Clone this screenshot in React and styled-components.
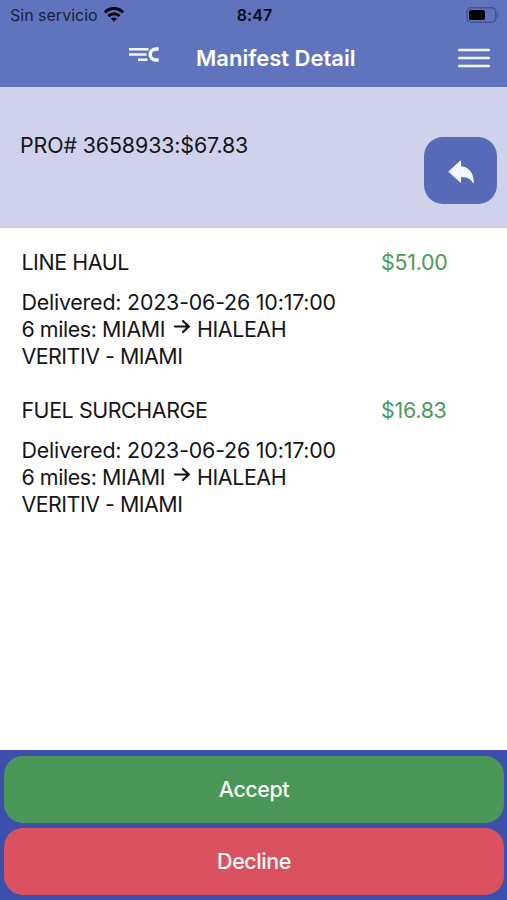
import React from "react";
import styled, { createGlobalStyle } from "styled-components";

const GlobalStyle = createGlobalStyle`
  * {
    box-sizing: border-box;
  }

  body {
    margin: 0;
    font-family: Inter, "Liberation Sans", sans-serif;
    color: #151518;
    background-color: #fff;
  }
`;

const Screen = styled.div`
  display: flex;
  flex-direction: column;
  height: 100vh;
  overflow: hidden;
`;

const Header = styled.header`
  height: 87px;
  background-color: #6074bd;
`;

const StatusBar = styled.div`
  display: grid;
  grid-template-columns: 1fr auto 1fr;
  align-items: center;
  height: 29px;
  padding: 0 8px 0 10px;
`;

const Carrier = styled.div`
  display: flex;
  align-items: center;
  gap: 6px;
  font-size: 16px;
  line-height: 20px;
  color: #1a2140;
`;

const Clock = styled.div`
  font-size: 16px;
  line-height: 20px;
  font-weight: 600;
  letter-spacing: 0.1px;
  color: #080b18;
`;

const BatteryIcon = styled.svg`
  justify-self: end;
`;

const NavBar = styled.div`
  display: flex;
  align-items: center;
  height: 58px;
  padding: 0 17px 1px 129px;
`;

const LogoIcon = styled.svg`
  margin: 0 37px 6px 0;
`;

const MenuIcon = styled.svg`
  margin-top: 1px;
`;

const Title = styled.h1`
  flex: 1;
  margin: 0;
  font-size: 22px;
  line-height: 28px;
  font-weight: 600;
  color: #fff;
`;

const Text = styled.span`
  font-size: 21.4px;
  line-height: 27px;
  white-space: nowrap;
  letter-spacing: ${(props) => props.$spacing || -0.4}px;
`;

const Summary = styled.section`
  display: flex;
  justify-content: space-between;
  align-items: flex-start;
  height: 141px;
  padding: 45px 10px 0 20px;
  background-color: #d0d2ec;
  border-bottom: 2px solid #cccdde;
`;

const BackButton = styled.button`
  display: flex;
  align-items: center;
  justify-content: center;
  width: 73px;
  height: 67px;
  margin-top: 5px;
  padding: 2px 0 0 1px;
  border: 0;
  border-radius: 19px;
  background-color: #576bb8;
`;

const Charges = styled.main`
  flex: 1;
  padding: 21px 0 0 21.4px;
`;

const Charge = styled.article`
  height: 148px;
`;

const ChargeHead = styled.div`
  display: grid;
  grid-template-columns: 359.6px 1fr;
  margin-bottom: 13px;
`;

const Amount = styled(Text)`
  color: #4c9a5c;
`;

const Line = styled.div`
  display: flex;
  height: 27px;
`;

const ArrowIcon = styled.svg`
  margin: 3px 6px 0 8px;
`;

const Footer = styled.footer`
  display: flex;
  flex-direction: column;
  gap: 5px;
  height: 150px;
  padding: 6px 3px 0 4px;
  background-color: #3c4fad;
`;

const ActionButton = styled.button`
  height: 67px;
  padding: 0 0 1px;
  border: 0;
  border-radius: 19px;
  font-family: inherit;
  font-size: 21.4px;
  font-weight: 500;
  letter-spacing: -0.4px;
  color: #f8fbf8;
  background-color: ${(props) => (props.$danger ? "#da5260" : "#4a9757")};
`;

const charges = [
  { name: "LINE HAUL", amount: "$51.00" },
  { name: "FUEL SURCHARGE", amount: "$16.83" },
];

export default function App() {
  return (
    <>
      <GlobalStyle />
      <Screen>
        <Header>
          <StatusBar>
            <Carrier>
              Sin servicio
              <svg width="20" height="15" viewBox="0 0 20 15" fill="none">
                <g stroke="#05070f" strokeWidth="3">
                  <path d="M1 5.4C6 .1 14 .1 19 5.4" />
                  <path d="M4.4 9.1C7.6 6 12.4 6 15.6 9.1" />
                </g>
                <path d="M10 14.8 6.9 11.600C8.8 10.1 11.2 10.1 13.1 11.600Z" fill="#05070f" />
              </svg>
            </Carrier>
            <Clock>8:47</Clock>
            <BatteryIcon width="33" height="16" viewBox="0 0 33 16">
              <rect x="1" y="0.8" width="28.8" height="14.4" rx="4.2" fill="none" stroke="#46558e" strokeWidth="1.5" />
              <rect x="3" y="3" width="16" height="10" rx="2" fill="#03040a" />
              <path d="M31 5.5c1.8.7 1.8 4.3 0 5z" fill="#46558e" />
            </BatteryIcon>
          </StatusBar>
          <NavBar>
            <LogoIcon width="30" height="15" viewBox="0 0 30 15" fill="none" stroke="#f4f6fd">
              <path d="M0 2.2H19.5M0 7.5H17.5M9 12.8H18.5" strokeWidth="2.6" />
              <path d="M29.7 2H27.2C19.2 2 19.2 13 27.2 13H29.7" strokeWidth="3.4" />
            </LogoIcon>
            <Title>Manifest Detail</Title>
            <MenuIcon width="32" height="20" viewBox="0 0 32 20" stroke="#f2f5fd" strokeWidth="2.6" strokeLinecap="round">
              <path d="M1.3 2H30.7M1.3 10H30.7M1.3 18H30.7" />
            </MenuIcon>
          </NavBar>
        </Header>
        <Summary>
          <Text $spacing={-0.12}>PRO# 3658933:$67.83</Text>
          <BackButton aria-label="Back">
            <svg width="26" height="24" viewBox="0 0 26 24" fill="#f4f8ff" stroke="#f4f8ff" strokeWidth="1" strokeLinejoin="round">
              <path d="M.8 11.6 12.5 1V6.8C20.5 7 25.3 13 25.3 22.8C22.5 18 18.5 16.5 12.5 16.7V22.3Z" />
            </svg>
          </BackButton>
        </Summary>
        <Charges>
          {charges.map((item) => (
            <Charge key={item.name}>
              <ChargeHead>
                <Text>{item.name}</Text>
                <Amount $spacing={-0.25}>{item.amount}</Amount>
              </ChargeHead>
              <Line>
                <Text $spacing={-0.19}>Delivered: 2023-06-26 10:17:00</Text>
              </Line>
              <Line>
                <Text>6 miles: MIAMI</Text>
                <ArrowIcon width="18" height="16" viewBox="0 0 18 16" fill="none" stroke="#111" strokeWidth="2.2" strokeLinecap="round">
                  <path d="M2 7.5H15.5M10 2 15.8 7.5 10 13" />
                </ArrowIcon>
                <Text>HIALEAH</Text>
              </Line>
              <Line>
                <Text $spacing={-0.48}>VERITIV - MIAMI</Text>
              </Line>
            </Charge>
          ))}
        </Charges>
        <Footer>
          <ActionButton>Accept</ActionButton>
          <ActionButton $danger>Decline</ActionButton>
        </Footer>
      </Screen>
    </>
  );
}
